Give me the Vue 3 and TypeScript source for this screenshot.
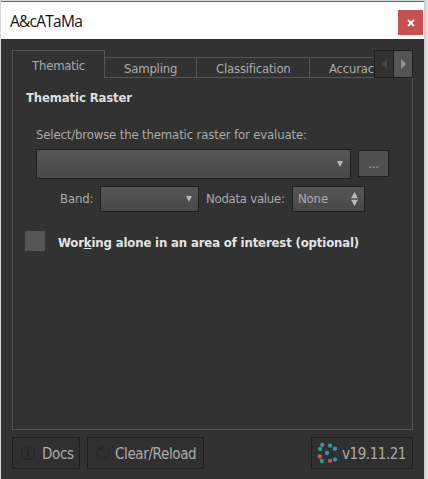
<script setup lang="ts">
import { ref } from 'vue'

const tabs = ['Thematic', 'Sampling', 'Classification', 'Accuracy']
const active = ref(0)
const restrictArea = ref(false)

interface Dot { x: number; y: number; color: string }
const dots: Dot[] = [
  { x: 5.2, y: 3, color: '#3f93ad' },
  { x: 13, y: 3.7, color: '#3f93ad' },
  { x: 18, y: 6.7, color: '#3f93ad' },
  { x: 3, y: 7, color: '#16ac83' },
  { x: 10, y: 11, color: '#3f93ad' },
  { x: 2.8, y: 14.5, color: '#d44c6c' },
  { x: 4.9, y: 19, color: '#16ac83' },
  { x: 13, y: 18.8, color: '#d44c6c' },
  { x: 18, y: 17.6, color: '#3f93ad' },
]
</script>

<template>
  <div class="desktop">
    <main class="window">
      <header class="titlebar">
        <span class="title">A&amp;cATaMa</span>
        <button class="close" aria-label="Close">
          <svg width="8" height="8" viewBox="0 0 8 8"><path d="M1 1L7 7M7 1L1 7" stroke="#fff" stroke-width="1.8" /></svg>
        </button>
      </header>
      <section class="body">
        <nav class="tabs">
          <button v-for="(tab, i) in tabs" :key="tab" class="tab" :class="['t' + i, { active: i === active }]" @click="active = i">
            <span>{{ tab }}</span>
          </button>
          <div class="scroller">
            <span class="arrow off"><svg width="5" height="10" viewBox="0 0 5 10"><path d="M5 0V10L0 5Z" fill="#484848" /></svg></span>
            <span class="arrow on"><svg width="5" height="10" viewBox="0 0 5 10"><path d="M0 0V10L5 5Z" fill="#929292" /></svg></span>
          </div>
        </nav>
        <div class="pane">
          <h2>Thematic Raster</h2>
          <p class="hint">Select/browse the thematic raster for evaluate:</p>
          <div class="file-row">
            <div class="field combo"><svg width="6" height="6" viewBox="0 0 6 6"><path d="M0 0H6L3 6Z" fill="#b9b9b9" /></svg></div>
            <button class="browse">...</button>
          </div>
          <div class="band-row">
            <span class="band-label">Band:</span>
            <div class="field band"><svg width="6" height="6" viewBox="0 0 6 6"><path d="M0 0H6L3 6Z" fill="#b9b9b9" /></svg></div>
            <span class="nodata-label">Nodata value:</span>
            <div class="field spin">
              <span>None</span>
              <svg width="7" height="14" viewBox="0 0 7 14"><path d="M0 6.3L3.5 0L7 6.3ZM0 7.7H7L3.5 14Z" fill="#b9b9b9" /></svg>
            </div>
          </div>
          <label class="area">
            <span class="box" @click="restrictArea = !restrictArea"></span>
            <span class="area-text">Wor<u>k</u>ing alone in an area of interest (optional)</span>
          </label>
        </div>
        <footer>
          <button class="action docs">
            <svg width="16" height="16" viewBox="0 0 16 16" fill="none" stroke="#242424"><circle cx="8" cy="8" r="6.5" /><path d="M8 6.8V12M8 3.8V5.4" stroke-width="1.6" /></svg>
            <span>Docs</span>
          </button>
          <button class="action reload">
            <svg width="16" height="16" viewBox="0 0 16 16" fill="none" stroke="#272727" stroke-width="1.3"><path d="M4 12.2A5.5 5.5 0 0 1 7 2.6M5 1.3L7.4 2.6L5.8 4.8M12 3.8A5.5 5.5 0 0 1 9 13.4M11 14.7L8.6 13.4L10.2 11.2" /></svg>
            <span>Clear/Reload</span>
          </button>
          <button class="action version">
            <svg width="21" height="22" viewBox="0 0 21 22"><circle v-for="(d, i) in dots" :key="i" :cx="d.x" :cy="d.y" r="2.15" :fill="d.color" /></svg>
            <span>v19.11.21</span>
          </button>
        </footer>
      </section>
    </main>
  </div>
</template>

<style>
body { overflow: hidden; background: #d9dbdb; }
</style>
<style scoped>
* { box-sizing: border-box; }
button { padding: 0; border: 0; font: inherit; letter-spacing: inherit; color: inherit; background: none; }
svg { display: block; flex: none; }
.desktop { width: 428px; height: 479px; padding: 1px 4px 0 1px; background: linear-gradient(90deg, #d5d8d8 0 424px, #c9cbcb 424px, #e5e7e7 428px); font-family: "DejaVu Sans Condensed", "DejaVu Sans", sans-serif; font-stretch: condensed; letter-spacing: -0.14px; color: #ababab; white-space: nowrap; }
.window { height: 478px; border-top: 1px solid #6b6b6b; background: #323232; }
.titlebar { height: 37px; background: #fff; display: flex; justify-content: space-between; padding: 8px 1px 0 9px; }
.title { font: 15.5px/22px "Open Sans", sans-serif; letter-spacing: -0.75px; color: #111; }
.close { width: 25px; height: 25px; background: #c75050; display: grid; place-items: center; }
.body { padding: 11px 11px 0 11px; }
.tabs { display: flex; align-items: flex-end; height: 28px; width: 401px; font-size: 13px; }
.tab { height: 21px; flex: none; border: 1px solid #555; border-left: 0; line-height: 21px; text-align: left; letter-spacing: -0.2px; }
.tab.active { height: 28px; border: 1px solid #555; border-bottom: 0; line-height: 29px; }
.t0 { width: 93px; padding-left: 19px; }
.t1 { width: 92px; padding-left: 19px; }
.t2 { width: 113px; padding-left: 19px; }
.t3 { width: 64px; padding-left: 19px; overflow: hidden; border-right: 0; }
.scroller { display: flex; width: 39px; height: 28px; border: 1px solid #1e1e1e; }
.arrow { width: 18px; display: grid; place-items: center; }
.arrow.on { width: 19px; background: #555; border-left: 1px solid #1e1e1e; }
.pane { width: 401px; height: 352px; border: 1px solid #555; border-top: 0; padding: 10px 0 0 12px; }
h2 { margin: 0 0 0 1px; font-size: 13px; line-height: 20px; color: #dedede; }
.hint { margin: 17px 0 0 11px; font-size: 13px; line-height: 20px; }
.file-row { display: flex; align-items: flex-start; gap: 7px; margin: 4px 0 0 11px; }
.field { border: 1px solid #1e1e1e; background: linear-gradient(#565656, #484848); display: flex; align-items: center; justify-content: flex-end; padding-right: 7px; }
.combo { width: 315px; height: 30px; }
.browse { margin-top: 1px; width: 31px; height: 27px; border: 1px solid #1e1e1e; background: #505050; font-size: 13px; line-height: 22px; }
.band-row { display: flex; margin: 7px 0 0 35px; height: 26px; line-height: 26px; font-size: 13px; }
.band-label { width: 40px; }
.band { width: 99px; padding-right: 6px; }
.nodata-label { margin-left: 7px; width: 86px; letter-spacing: -0.25px; }
.spin { width: 73px; justify-content: space-between; padding: 0 6px 0 5px; }
.area { display: flex; align-items: center; gap: 13px; margin-top: 19px; height: 20px; font-size: 13px; font-weight: bold; color: #e3e3e3; }
.box { width: 20px; height: 20px; background: #555; }
.area-text { padding-top: 3px; }
footer { display: flex; margin-top: 7px; width: 401px; font-size: 15px; letter-spacing: -0.37px; }
.action { height: 32px; border: 1px solid #1e1e1e; display: flex; align-items: center; background: #303030; padding-left: 7px; }
.action span { padding-top: 1px; }
.docs { width: 68px; gap: 6px; }
.reload { width: 117px; margin-left: 7px; gap: 4px; }
.version { width: 102px; margin-left: auto; padding-left: 5px; gap: 4px; letter-spacing: -0.45px; }
</style>
